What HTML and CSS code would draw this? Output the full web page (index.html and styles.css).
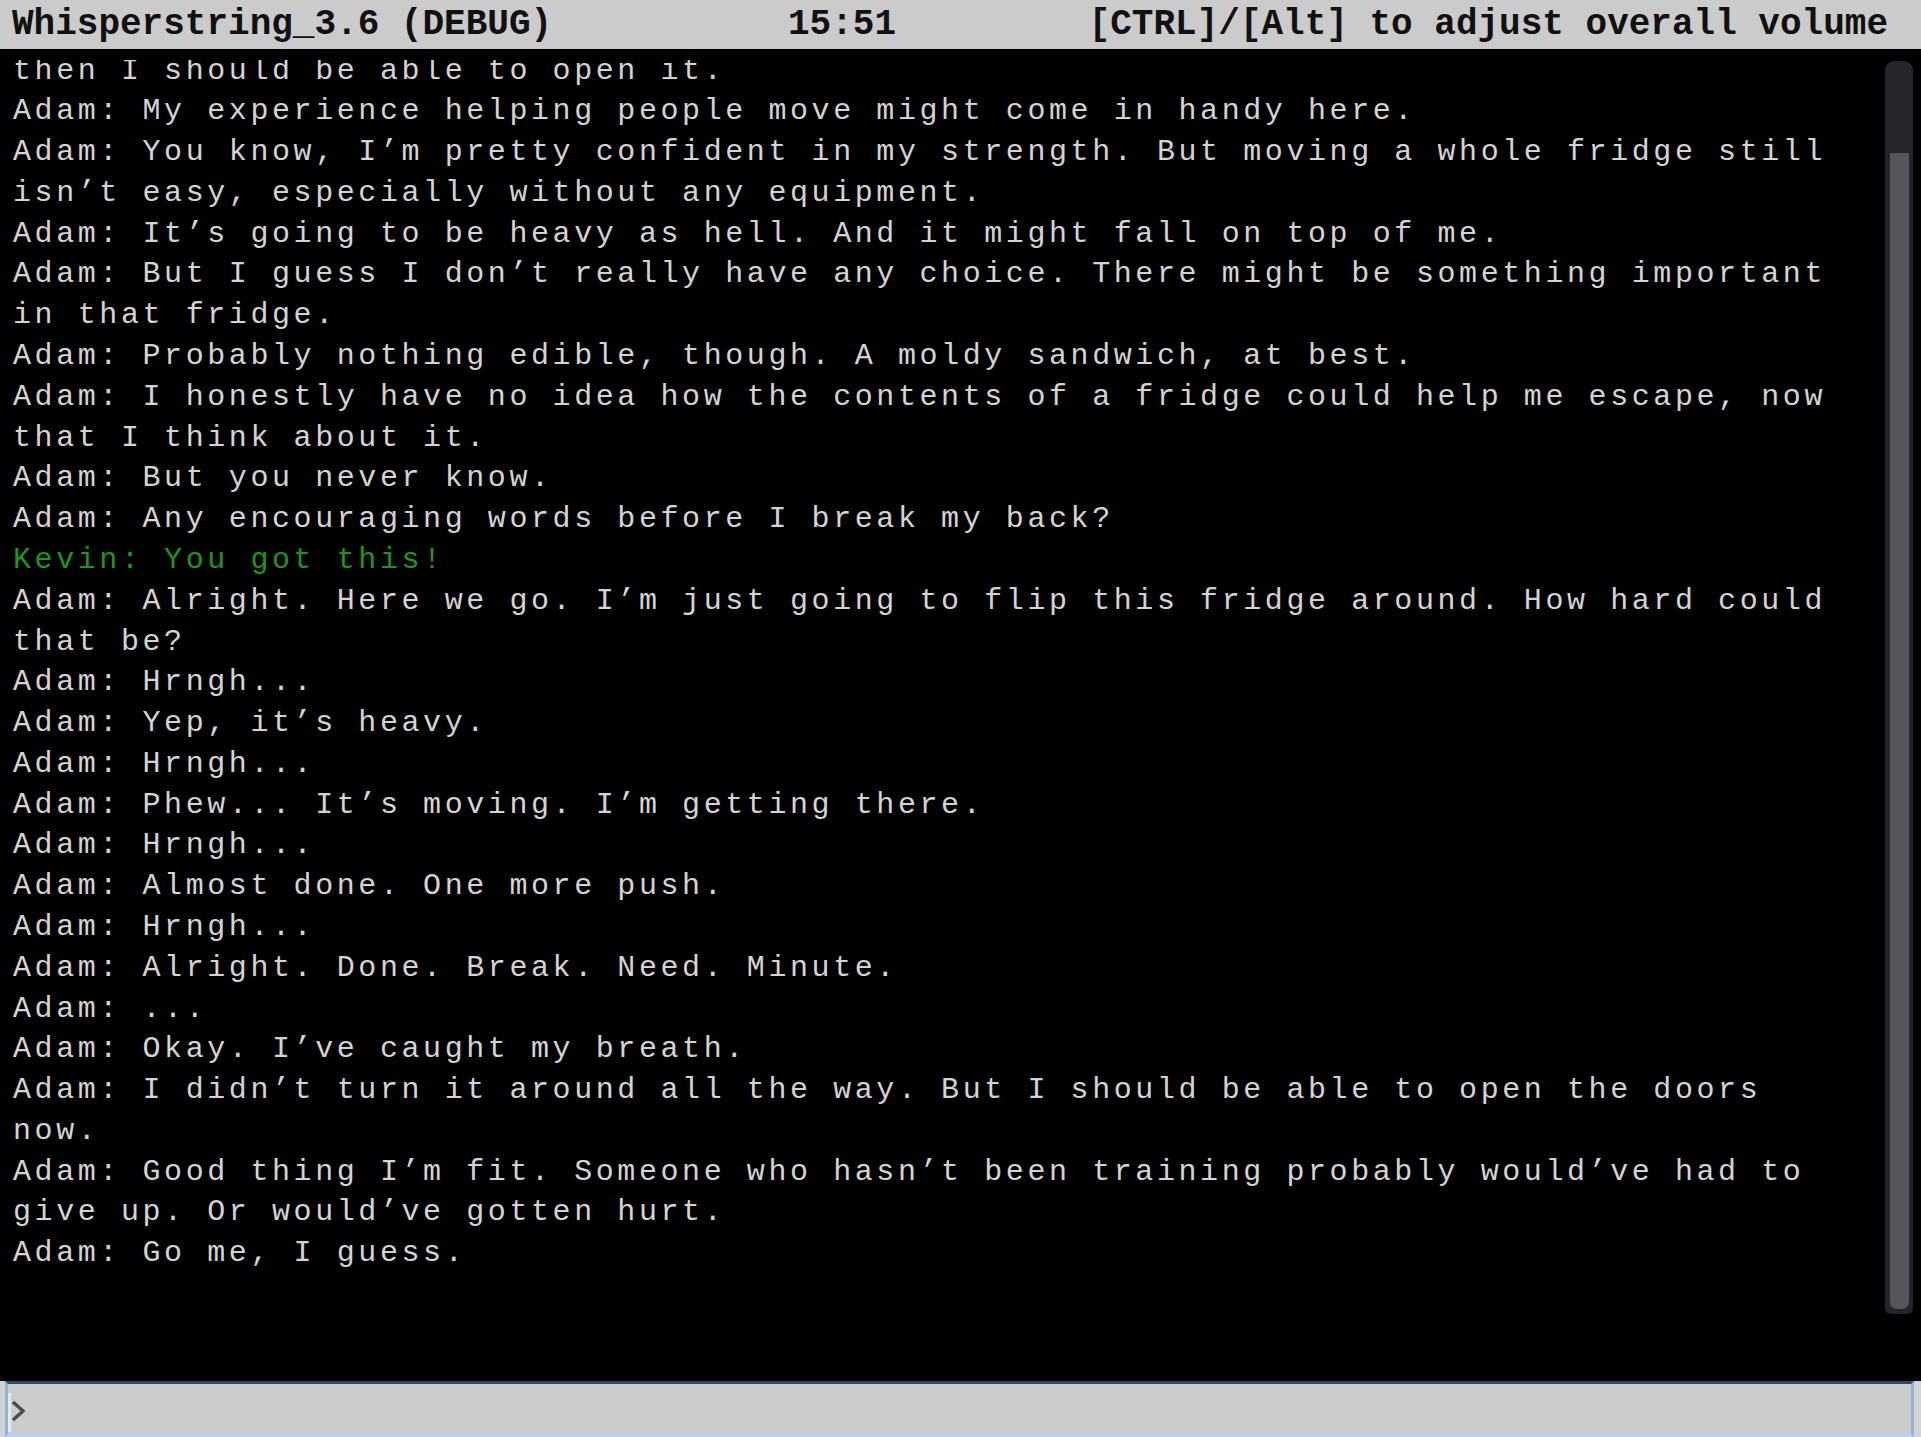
FILE: index.html
```html
<!DOCTYPE html>
<html lang="en">
<head>
<meta charset="utf-8">
<title>Whisperstring_3.6 (DEBUG)</title>
<link rel="stylesheet" href="styles.css">
</head>
<body>
<div class="app">
  <header class="topbar">
    <span class="title">Whisperstring_3.6 (DEBUG)</span>
    <span class="clock">15:51</span>
    <span class="hint">[CTRL]/[Alt] to adjust overall volume</span>
  </header>
  <main class="main">
    <div class="log">
      <div class="lines">
        <div class="msg">then I should be able to open it.</div>
        <div class="msg">Adam: My experience helping people move might come in handy here.</div>
        <div class="msg">Adam: You know, I’m pretty confident in my strength. But moving a whole fridge still isn’t easy, especially without any equipment.</div>
        <div class="msg">Adam: It’s going to be heavy as hell. And it might fall on top of me.</div>
        <div class="msg">Adam: But I guess I don’t really have any choice. There might be something important in that fridge.</div>
        <div class="msg">Adam: Probably nothing edible, though. A moldy sandwich, at best.</div>
        <div class="msg">Adam: I honestly have no idea how the contents of a fridge could help me escape, now that I think about it.</div>
        <div class="msg">Adam: But you never know.</div>
        <div class="msg">Adam: Any encouraging words before I break my back?</div>
        <div class="msg player">Kevin: You got this!</div>
        <div class="msg">Adam: Alright. Here we go. I’m just going to flip this fridge around. How hard could that be?</div>
        <div class="msg">Adam: Hrngh...</div>
        <div class="msg">Adam: Yep, it’s heavy.</div>
        <div class="msg">Adam: Hrngh...</div>
        <div class="msg">Adam: Phew... It’s moving. I’m getting there.</div>
        <div class="msg">Adam: Hrngh...</div>
        <div class="msg">Adam: Almost done. One more push.</div>
        <div class="msg">Adam: Hrngh...</div>
        <div class="msg">Adam: Alright. Done. Break. Need. Minute.</div>
        <div class="msg">Adam: ...</div>
        <div class="msg">Adam: Okay. I’ve caught my breath.</div>
        <div class="msg">Adam: I didn’t turn it around all the way. But I should be able to open the doors now.</div>
        <div class="msg">Adam: Good thing I’m fit. Someone who hasn’t been training probably would’ve had to give up. Or would’ve gotten hurt.</div>
        <div class="msg">Adam: Go me, I guess.</div>
      </div>
    </div>
    <div class="scrollbar">
      <div class="thumb" style="height: 92.6%"></div>
    </div>
  </main>
  <footer class="inputbar">
    <div class="field">
      <span class="caret"></span>
      <svg class="prompt" width="14" height="22" viewBox="0 0 14 22" aria-hidden="true">
        <polyline points="2,2 12,11 2,20" fill="none" stroke="#4b4b4b" stroke-width="3.5" stroke-linejoin="miter" stroke-linecap="butt"/>
      </svg>
    </div>
  </footer>
</div>
</body>
</html>
```

FILE: styles.css
```css
html, body {
  margin: 0;
  padding: 0;
  background: #000;
  height: 100%;
  overflow: hidden;
}

.app {
  display: grid;
  grid-template-rows: 49px 1fr 56px;
  height: 100vh;
  font-family: "Liberation Mono", "DejaVu Sans Mono", monospace;
}

.topbar {
  display: grid;
  grid-template-columns: 776px 108px 1fr;
  align-items: center;
  background: #cbcbcb;
  color: #111;
  font-size: 36px;
  font-weight: bold;
  line-height: 49px;
  padding-left: 12px;
  padding-right: 33px;
  white-space: nowrap;
}

.hint {
  justify-self: end;
}

.main {
  display: grid;
  grid-template-columns: 1fr 28px;
  column-gap: 12px;
  padding: 11px 8px 67px 13px;
  min-height: 0;
}

.log {
  overflow: hidden;
  display: flex;
  flex-direction: column;
  justify-content: flex-end;
  padding-bottom: 40px;
  min-height: 0;
}

.lines {
  width: 1830px;
  color: #d4d4d4;
  font-size: 30px;
  letter-spacing: 3.58px;
  line-height: 40.78px;
}

.msg.player {
  color: #1c961c;
}

.scrollbar {
  display: flex;
  flex-direction: column;
  justify-content: flex-end;
  background: #25252b;
  border-radius: 9px 9px 6px 6px;
  margin-top: 1px;
  padding: 0 4px 5px 5px;
}

.thumb {
  background: #55555e;
  border-radius: 0 0 7px 7px;
}

.inputbar {
  display: flex;
  background: #d3d3d3;
  padding: 0 7px 0 5px;
}

.field {
  flex: 1;
  display: flex;
  align-items: flex-start;
  background: #cccccc;
  border-top: 3px solid #2d4a66;
  border-bottom: 3px solid #b5d3f7;
  border-left: 3px solid #8fb4d8;
  border-right: 3px solid #8fb4d8;
}

.caret {
  width: 3px;
  height: 39px;
  margin-top: 9px;
  background: #e8e8e8;
}

.prompt {
  margin-top: 16px;
  margin-left: 0;
}
```
